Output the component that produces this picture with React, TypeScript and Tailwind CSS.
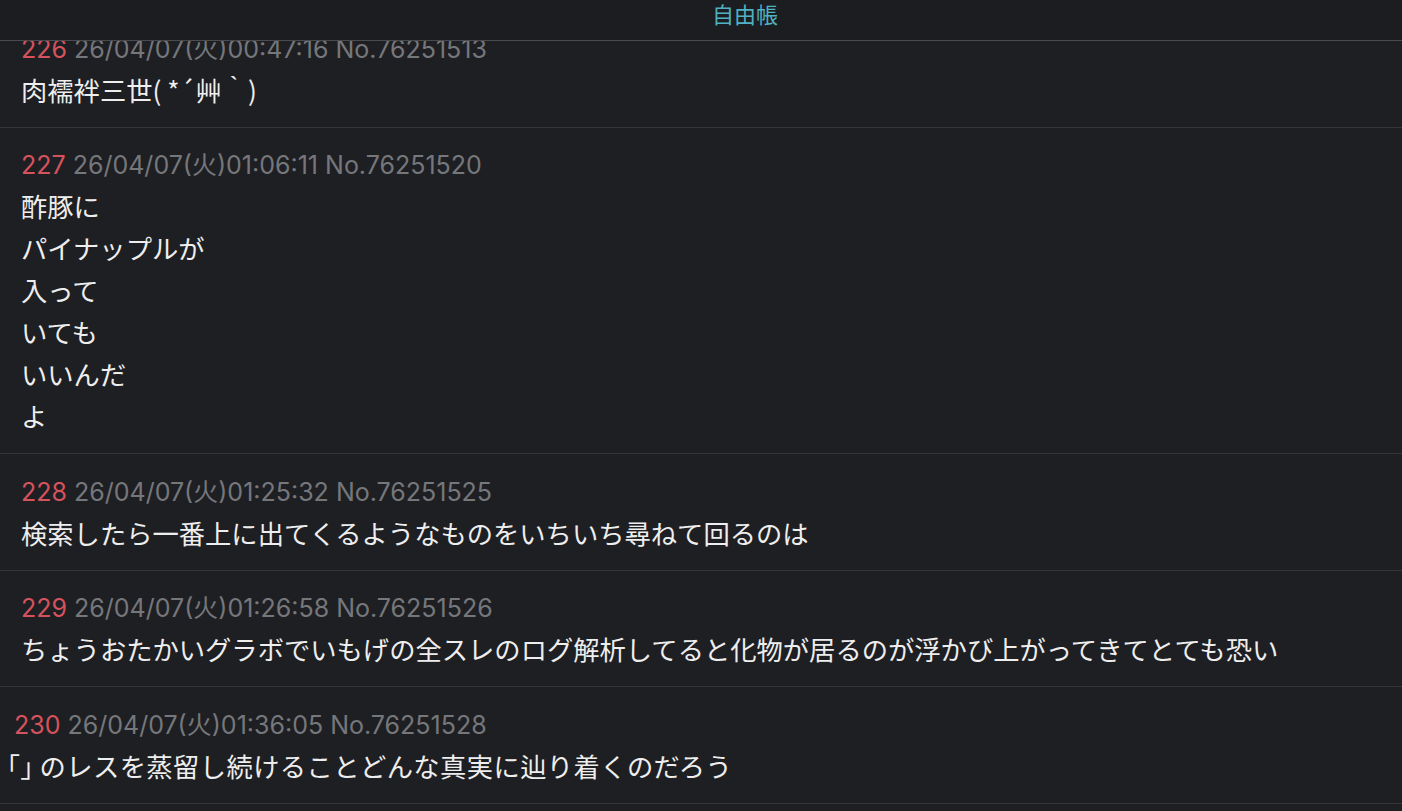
import React from 'react'

type Post = {
  no: number
  date: string
  id: string
  lines: React.ReactNode[]
  shift?: boolean
}

const posts: Post[] = [
  { no: 226, date: '26/04/07(火)00:47:16', id: 'No.76251513', lines: ['肉襦袢三世( *´艸｀)'] },
  {
    no: 227,
    date: '26/04/07(火)01:06:11',
    id: 'No.76251520',
    lines: ['酢豚に', 'パイナップルが', '入って', 'いても', 'いいんだ', 'よ']
  },
  {
    no: 228,
    date: '26/04/07(火)01:25:32',
    id: 'No.76251525',
    lines: ['検索したら一番上に出てくるようなものをいちいち尋ねて回るのは']
  },
  {
    no: 229,
    date: '26/04/07(火)01:26:58',
    id: 'No.76251526',
    lines: ['ちょうおたかいグラボでいもげの全スレのログ解析してると化物が居るのが浮かび上がってきてとても恐い']
  },
  {
    no: 230,
    date: '26/04/07(火)01:36:05',
    id: 'No.76251528',
    lines: [
      <>
        <span className="[font-feature-settings:'halt']">「」</span>
        <span className="tracking-[0.4px]"> のレスを蒸留し続けることどんな真実に辿り着くのだろう</span>
      </>
    ],
    shift: true
  }
]

const PostRow = ({ post }: { post: Post }) => {
  return (
    <article className="border-b border-[#35363a] pt-[22.5px] pb-[16px]">
      <div
        className={
          'h-[30px] leading-[30px] text-[25px] whitespace-nowrap font-["Inter","Noto_Sans_CJK_JP",sans-serif] ' +
          (post.shift ? 'pl-[14px]' : 'pl-[21px]')
        }
      >
        <span className="text-[#d6525c]">{post.no}</span>{' '}
        <span className="text-[#76777b]">
          {post.date} {post.id}
        </span>
      </div>
      <div
        className={
          'mt-[5px] text-[26.3px] leading-[42px] text-[#eeeeee] font-["Noto_Sans_CJK_JP",sans-serif] ' +
          (post.shift ? 'pl-[7px]' : 'pl-[21px]')
        }
      >
        {post.lines.map((line, i) => (
          <div key={i} className="whitespace-nowrap">
            {line}
          </div>
        ))}
      </div>
    </article>
  )
}

export default function App() {
  return (
    <div className="relative h-[811px] w-[1402px] overflow-hidden bg-[#1e1f23]">
      <header className="absolute inset-x-0 top-0 z-10 flex h-[41px] items-start justify-center border-b border-[#4a4b4e] bg-[#1c1d20] pl-[88px]">
        <h1 className='text-[22px] leading-[26px] text-[#4fb1c2] font-["Noto_Sans_CJK_JP",sans-serif]'>
          自由帳
        </h1>
      </header>
      <main className="pt-[11px]">
        {posts.map((p) => (
          <PostRow key={p.no} post={p} />
        ))}
      </main>
    </div>
  )
}
